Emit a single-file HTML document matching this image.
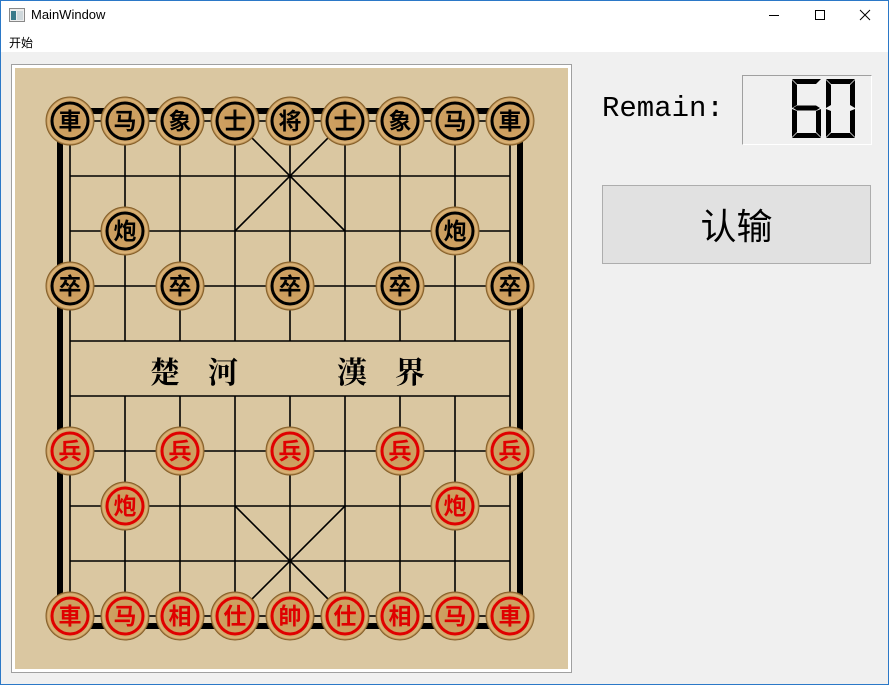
<!DOCTYPE html><html><head><meta charset="utf-8"><style>
body{margin:0;width:889px;height:685px;overflow:hidden;background:#f0f0f0;font-family:"Liberation Sans","Noto Sans CJK SC",sans-serif;position:relative}
.title{position:absolute;left:0;top:0;width:889px;height:30px;background:#fff;border-bottom:0}
.menu{position:absolute;left:0;top:30px;width:889px;height:22px;background:#fff}
.win{position:absolute;left:0;top:0;width:887px;height:683px;border:1px solid #2b78c7;pointer-events:none}
</style></head><body>
<div class="title">
<svg style="position:absolute;left:9px;top:8px" width="16" height="14"><rect x="0.5" y="0.5" width="15" height="13" fill="#eee" stroke="#888"/><rect x="2" y="3" width="5" height="9" fill="#3a7a8a"/><rect x="8" y="3" width="6" height="9" fill="#cfd8dc"/></svg>
<div style="position:absolute;left:31px;top:7px;font-size:13px;color:#000">MainWindow</div>
<svg style="position:absolute;left:760px;top:0" width="129" height="30"><line x1="9" y1="15.5" x2="19" y2="15.5" stroke="#000"/><rect x="55.5" y="10.5" width="9" height="9" fill="none" stroke="#000"/><path d="M100 10L110 20M110 10L100 20" stroke="#000"/></svg>
</div>
<div class="menu"><div style="position:absolute;left:9px;top:4px;font-size:12px">开始</div></div>
<div style="position:absolute;left:11px;top:64px;width:559px;height:607px;border:1px solid #a0a0a0;background:#fff"></div>
<svg style="position:absolute;left:15px;top:68px" width="553" height="601" viewBox="15 68 553 601">
<defs><radialGradient id="g" cx="50%" cy="50%" r="50%"><stop offset="0" stop-color="#c9995a"/><stop offset="0.8" stop-color="#cfa263"/><stop offset="0.92" stop-color="#dcb57a"/><stop offset="1" stop-color="#9a6f35"/></radialGradient></defs>
<rect x="15" y="68" width="553" height="601" fill="#dac7a1"/>
<rect x="60" y="111" width="460" height="515" fill="none" stroke="#000" stroke-width="6"/>
<g stroke="#000" stroke-width="1.6" fill="none">
<rect x="70" y="121" width="440" height="495"/>
<path d="M70 176H510M70 231H510M70 286H510M70 341H510M70 396H510M70 451H510M70 506H510M70 561H510"/>
<path d="M125 121V341M180 121V341M235 121V341M290 121V341M345 121V341M400 121V341M455 121V341"/>
<path d="M125 396V616M180 396V616M235 396V616M290 396V616M345 396V616M400 396V616M455 396V616"/>
<path d="M235 121L345 231M345 121L235 231M235 506L345 616M345 506L235 616"/>
</g>
<g font-family="'Noto Serif CJK SC',serif" font-weight="bold" font-size="30" fill="#000">
<text x="150" y="383">楚</text><text x="208" y="383">河</text><text x="337" y="383">漢</text><text x="395" y="383">界</text></g>
<g font-family="'Noto Sans CJK SC',sans-serif" font-size="23" font-weight="bold" text-anchor="middle">
<g id="pieces"></g>
</g>
</svg>
<div style="position:absolute;left:602px;top:92px;font-family:'Liberation Mono',monospace;font-size:29px;color:#000">Remain:</div>
<div style="position:absolute;left:742px;top:75px;width:128px;height:68px;border:1px solid #a0a0a0;border-bottom-color:#fff;border-right-color:#fff"></div>
<svg style="position:absolute;left:742px;top:75px" width="130" height="70">
<g fill="#000">
<polygon points="50,4 79,4 74,9 55,9"/>
<polygon points="50,5 55,10 55,30 50,33"/>
<polygon points="51,33 55,30.5 74,30.5 78,33 74,35.5 55,35.5"/>
<polygon points="50,34 55,36 55,57 50,62"/>
<polygon points="50,63 55,58 74,58 79,63"/>
<polygon points="79,34 74,36 74,57 79,62"/>
<polygon points="84,4 113,4 108,9 89,9"/>
<polygon points="84,5 89,10 89,30 84,33"/>
<polygon points="113,5 108,10 108,30 113,33"/>
<polygon points="84,34 89,36 89,57 84,62"/>
<polygon points="113,34 108,36 108,57 113,62"/>
<polygon points="84,63 89,58 108,58 113,63"/>
</g></svg>
<div style="position:absolute;left:602px;top:185px;width:267px;height:77px;background:#e1e1e1;border:1px solid #adadad;text-align:center;line-height:77px;font-size:36px;font-family:'Noto Sans CJK SC',sans-serif">认输</div>
<div class="win"></div>
<script>
var X=[70,125,180,235,290,345,400,455,510],s='';
function p(c,r,t,red){var x=X[c],y=121+r*55;var col=red?'#e00000':'#000';
s+='<circle cx="'+x+'" cy="'+y+'" r="24" fill="url(#g)" stroke="#86602a" stroke-width="1"/><circle cx="'+x+'" cy="'+y+'" r="18" fill="none" stroke="'+col+'" stroke-width="3"/><text x="'+x+'" y="'+(y+8)+'" fill="'+col+'">'+t+'</text>';}
var b='車马象士将士象马車',rr='車马相仕帥仕相马車';
for(var i=0;i<9;i++){p(i,0,b[i],0);p(i,9,rr[i],1);}
p(1,2,'炮',0);p(7,2,'炮',0);p(1,7,'炮',1);p(7,7,'炮',1);
for(i=0;i<9;i+=2){p(i,3,'卒',0);p(i,6,'兵',1);}
document.getElementById('pieces').innerHTML=s;
</script>
</body></html>
